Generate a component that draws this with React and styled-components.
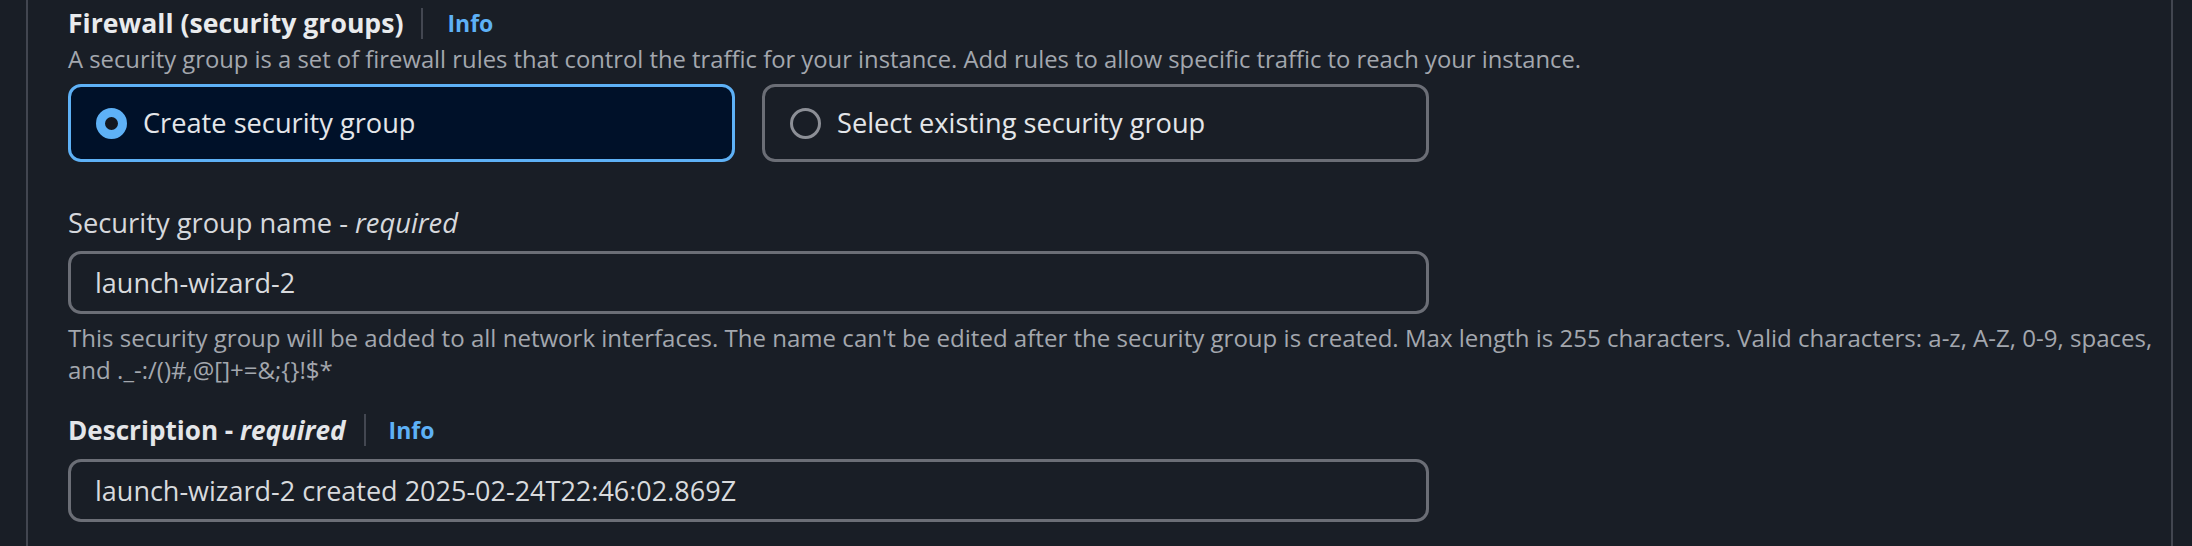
import React from "react";
import styled, { createGlobalStyle } from "styled-components";

const Global = createGlobalStyle`
  html, body { margin: 0; padding: 0; background: #191e26; }
  body { font-family: "Open Sans", "Noto Sans", sans-serif; -webkit-font-smoothing: antialiased; }
  * { box-sizing: border-box; }
`;

const Page = styled.div`
  height: 546px;
  overflow: hidden;
  padding-left: 26px;
  background: #191e26;
`;

const Panel = styled.section`
  width: 2147px;
  min-height: 546px;
  border-left: 2px solid #424650;
  border-right: 2px solid #424650;
  padding: 3px 8px 0 40px;
`;

const HeaderRow = styled.div`
  display: flex;
  align-items: center;
  height: 40px;
`;

const Title = styled.h2`
  margin: 0;
  font-size: 26.6px;
  line-height: 40px;
  font-weight: 700;
  color: #e9ebed;
`;

const Divider = styled.span`
  width: 2px;
  height: ${(p) => p.$h || 31}px;
  background: #434751;
  margin: 0 ${(p) => p.$right || 24}px 0 ${(p) => p.$left || 18}px;
`;

const InfoLink = styled.a`
  font-size: 23px;
  font-weight: 700;
  color: #5eb1f6;
  text-decoration: none;
  line-height: 32px;
`;

const Description = styled.p`
  margin: 0;
  font-size: 23.8px;
  line-height: 32px;
  color: #a3a7ae;
`;

const Tiles = styled.div`
  display: grid;
  grid-template-columns: 667px 667px;
  gap: 27px;
  margin-top: 9px;
`;

const Tile = styled.label`
  display: flex;
  align-items: center;
  height: 78px;
  padding-left: 25px;
  border: 3px solid ${(p) => (p.$selected ? "#5eb1f6" : "#6b6e76")};
  border-radius: 13px;
  background: ${(p) => (p.$selected ? "#001129" : "transparent")};
  cursor: pointer;
`;

const Radio = styled.span`
  flex: none;
  width: 31px;
  height: 31px;
  border-radius: 50%;
  border: ${(p) => (p.$checked ? "9.5px solid #5eb1f6" : "3px solid #8c8f96")};
  background: ${(p) => (p.$checked ? "#13171e" : "transparent")};
  margin-right: 16px;
`;

const TileText = styled.span`
  font-size: 27.2px;
  line-height: 36px;
  color: #e4e6e9;
`;

const Field = styled.div`
  width: 1361px;
  margin-top: ${(p) => p.$top}px;
`;

const LabelRow = styled.div`
  display: flex;
  align-items: center;
  height: 36px;
`;

const Label = styled.span`
  font-size: ${(p) => (p.$bold ? 26.1 : 27.3)}px;
  line-height: 36px;
  font-weight: ${(p) => (p.$bold ? 700 : 400)};
  color: ${(p) => (p.$bold ? "#e4e6e9" : "#d6d8dc")};
  & i { font-style: italic; }
`;

const TextBox = styled.div`
  display: flex;
  align-items: center;
  width: 1361px;
  height: 63px;
  margin-top: ${(p) => p.$top}px;
  padding: 0 0 0 24px;
  border: 3px solid #6b6e76;
  border-radius: 13px;
  background: #191e26;
  color: #d8dadd;
  font-size: 27px;
  line-height: 36px;
  white-space: nowrap;
`;

const Helper = styled.p`
  margin: 8px 0 0;
  font-size: 24.05px;
  line-height: 32px;
  color: #a3a7ae;
`;

export default function App() {
  return (
    <>
      <Global />
      <Page>
        <Panel>
          <HeaderRow>
            <Title>Firewall (security groups)</Title>
            <Divider $left={18} $right={24} $h={31} />
            <InfoLink href="#">Info</InfoLink>
          </HeaderRow>
          <Description>
            A security group is a set of firewall rules that control the traffic for your instance. Add rules to allow specific traffic to reach your instance.
          </Description>
          <Tiles>
            <Tile $selected>
              <Radio $checked />
              <TileText>Create security group</TileText>
            </Tile>
            <Tile>
              <Radio />
              <TileText>Select existing security group</TileText>
            </Tile>
          </Tiles>
          <Field $top={43}>
            <LabelRow>
              <Label>
                Security group name - <i>required</i>
              </Label>
            </LabelRow>
            <TextBox $top={10} role="textbox">launch-wizard-2</TextBox>
          </Field>
          <Helper>
            This security group will be added to all network interfaces. The name can't be edited after the security group is created. Max length is 255 characters. Valid characters: a-z, A-Z, 0-9, spaces, and ._-:/()#,@[]+=&;{"{}"}!$*
          </Helper>
          <Field $top={26}>
            <LabelRow>
              <Label $bold>
                Description - <i>required</i>
              </Label>
              <Divider $left={18} $right={23} $h={32} />
              <InfoLink href="#">Info</InfoLink>
            </LabelRow>
            <TextBox $top={11} role="textbox">launch-wizard-2 created 2025-02-24T22:46:02.869Z</TextBox>
          </Field>
        </Panel>
      </Page>
    </>
  );
}
